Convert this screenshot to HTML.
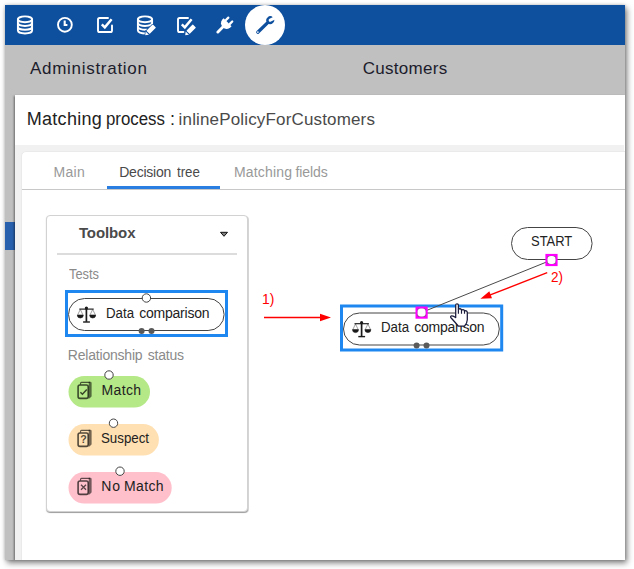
<!DOCTYPE html>
<html lang="en">
<head>
<meta charset="utf-8">
<title>Matching process : inlinePolicyForCustomers</title>
<style>
html,body{margin:0;padding:0;background:#fff;}
body{width:634px;height:569px;position:relative;overflow:hidden;font-family:"Liberation Sans",sans-serif;}
#shot{position:absolute;left:5px;top:5px;width:620px;height:555px;background:#c0c0c0;overflow:hidden;}
#shadow{position:absolute;left:5px;top:5px;width:620px;height:555px;box-shadow:2px 3px 6px rgba(0,0,0,.5),0 0 3px rgba(0,0,0,.2);}
#pg{position:absolute;left:-5px;top:-5px;width:634px;height:569px;}
.abs{position:absolute;}
.t{position:absolute;white-space:nowrap;line-height:1;}
#topbar{left:5px;top:5px;width:620px;height:40px;background:#0e4f9e;}
#sel{left:245px;top:5px;width:40px;height:40px;border-radius:50%;background:#fff;}
#sideblue{left:5px;top:222px;width:10px;height:28px;background:#2960ad;}
#panel{left:15px;top:95px;width:610px;height:465px;background:#fff;box-shadow:-1px 1px 2px rgba(0,0,0,.45);}
#band{left:15px;top:145px;width:609px;height:415px;background:#f1f1f1;}
#card{left:21px;top:151px;width:610px;height:415px;background:#fff;border:1px solid #eaeaea;border-radius:5px 0 0 0;box-sizing:border-box;}
#tabline{left:22px;top:189px;width:603px;height:1px;background:#c8c8c8;}
#tabsel{left:107px;top:186px;width:113px;height:3px;background:#2a7de1;}
#toolbox{left:46px;top:215px;width:202px;height:297px;box-sizing:border-box;border:1px solid #d2d2d2;border-radius:4px;background:#fff;box-shadow:1px 1px 0 rgba(0,0,0,.14),0 1px 1px rgba(0,0,0,.28);}
#hr{left:57px;top:253px;width:180px;height:2px;background:#dcdcdc;}
svg{position:absolute;overflow:visible;}
</style>
</head>
<body>
<div id="shadow"></div>
<div id="shot"><div id="pg">
<div class="abs" id="topbar"></div>
<div class="abs" id="sel"></div>
<div class="abs" id="sideblue"></div>
<div class="abs" id="panel"></div>
<div class="abs" id="band"></div>
<div class="abs" id="card"></div>
<div class="abs" id="tabline"></div>
<div class="abs" id="tabsel"></div>
<div class="abs" id="toolbox"></div>
<div class="abs" id="hr"></div>

<!-- shapes -->
<svg width="634" height="569" viewBox="0 0 634 569" style="left:0;top:0">
  <!-- toolbox: data comparison -->
  <rect x="66.5" y="291.5" width="160" height="44" fill="none" stroke="#1e88f0" stroke-width="3"/>
  <rect x="68.5" y="298.5" width="155.6" height="32" rx="16" ry="16" fill="#fff" stroke="#444" stroke-width="1"/>
  <circle cx="146.4" cy="298" r="4.2" fill="#fff" stroke="#444" stroke-width="1"/>
  <circle cx="141.6" cy="331" r="3" fill="#5a5a5a"/>
  <circle cx="151.5" cy="331" r="3" fill="#5a5a5a"/>
  <!-- toolbox: statuses -->
  <rect x="68.5" y="376" width="81.5" height="31.6" rx="15.8" ry="15.8" fill="#b5e886"/>
  <circle cx="109" cy="375" r="4.2" fill="#fff" stroke="#444" stroke-width="1"/>
  <rect x="68.5" y="424" width="90.4" height="31.6" rx="15.8" ry="15.8" fill="#ffe0b2"/>
  <circle cx="113.5" cy="423.2" r="4.2" fill="#fff" stroke="#444" stroke-width="1"/>
  <rect x="68.5" y="472" width="103.2" height="31.6" rx="15.8" ry="15.8" fill="#ffc0cb"/>
  <circle cx="120" cy="471.2" r="4.2" fill="#fff" stroke="#444" stroke-width="1"/>
  <!-- canvas: start -->
  <rect x="511.5" y="227.5" width="80.6" height="32" rx="16" ry="16" fill="#fff" stroke="#444" stroke-width="1"/>
  <!-- canvas: data comparison -->
  <rect x="341.5" y="306" width="160.2" height="44" fill="none" stroke="#1e88f0" stroke-width="3"/>
  <rect x="343.5" y="313" width="155.8" height="32" rx="16" ry="16" fill="#fff" stroke="#444" stroke-width="1"/>
  <circle cx="416.6" cy="345.5" r="3" fill="#5a5a5a"/>
  <circle cx="426.5" cy="345.5" r="3" fill="#5a5a5a"/>
  <!-- connection line -->
  <line x1="551.5" y1="260" x2="421.5" y2="312.5" stroke="#4a4a4a" stroke-width="1"/>
  <!-- red arrow 1 -->
  <line x1="264" y1="317.5" x2="322" y2="317.5" stroke="#ff0000" stroke-width="1.4"/>
  <polygon points="331,317.5 320,313.8 320,321.2" fill="#ff0000"/>
  <!-- red arrow 2 -->
  <line x1="547.2" y1="272.7" x2="489" y2="295.4" stroke="#ff0000" stroke-width="1.4"/>
  <polygon points="480.4,298.8 489.3,291.3 492,298.2" fill="#ff0000"/>
  <!-- caret -->
  <polygon points="220.5,232.3 227.5,232.3 224,236.3" fill="#808080" stroke="#111" stroke-width="1" stroke-linejoin="round"/>
  <!-- magenta handles -->
  <rect x="546.5" y="255" width="10" height="10" fill="#566656" stroke="#ff00ff" stroke-width="2.2"/>
  <rect x="547.5" y="256" width="8" height="8" rx="3.3" fill="#fff"/>
  <rect x="416.6" y="307.6" width="10" height="10" fill="#566656" stroke="#ff00ff" stroke-width="2.2"/>
  <rect x="417.6" y="308.6" width="8" height="8" rx="3.3" fill="#fff"/>
</svg>

<svg width="634" height="569" viewBox="0 0 634 569" style="left:0;top:0">
  <defs>
    <g id="scale">
      <!-- local origin = pill top-left -->
      <line x1="17.9" y1="9.6" x2="17.9" y2="23.8" stroke="#1a1a1a" stroke-width="1.7"/>
      <circle cx="17.9" cy="10.1" r="1.6" fill="#1a1a1a"/>
      <line x1="10.8" y1="11.1" x2="25.2" y2="11.1" stroke="#1a1a1a" stroke-width="1.15"/>
      <line x1="14.6" y1="24" x2="21.4" y2="24" stroke="#1a1a1a" stroke-width="1.4"/>
      <path d="M8.8 17 H14.8 A3 3 0 0 1 8.8 17Z" fill="#1a1a1a" stroke="#1a1a1a" stroke-width=".6"/>
      <path d="M21.2 17 H27.2 A3 3 0 0 1 21.2 17Z" fill="#1a1a1a" stroke="#1a1a1a" stroke-width=".6"/>
      <path d="M9.2 16.8 L11.8 11.4 L14.4 16.8 M21.6 16.8 L24.2 11.4 L26.8 16.8" fill="none" stroke="#1a1a1a" stroke-width=".75" stroke-opacity=".55"/>
    </g>
    <g id="cards" fill="none" stroke-linejoin="round">
      <!-- local origin = pill top-left; front card 8.8..20.5 x 8.2..23.2 -->
      <path d="M12 8.4 V7.4 Q12 6.4 13 6.4 H21.4" stroke="#000" stroke-opacity=".62" stroke-width="1.1"/>
      <path d="M20.2 5.85 H21.9 Q23.1 5.85 23.1 7.1 V19.9 Q23.1 20.5 22.6 20.9 L20.2 23 Z" fill="#000" fill-opacity=".55" stroke="none"/>
      <rect x="9.6" y="9" width="10.1" height="13.4" rx="1.8" ry="1.8" stroke="#000" stroke-opacity=".68" stroke-width="1.6"/>
    </g>
  </defs>

  <!-- top bar icons -->
  <g fill="none" stroke="#fff" stroke-width="1.9" stroke-linecap="round" stroke-linejoin="round">
    <!-- database -->
    <ellipse cx="25" cy="19.3" rx="7.1" ry="2.9"/>
    <path d="M17.9 19.3 V30.6 A7.1 2.9 0 0 0 32.1 30.6 V19.3"/>
    <path d="M17.9 23.1 A7.1 2.9 0 0 0 32.1 23.1 M17.9 26.9 A7.1 2.9 0 0 0 32.1 26.9"/>
    <!-- clock -->
    <circle cx="64.9" cy="24.8" r="6.9"/>
    <path d="M64.7 20.6 V25 H67.4" stroke-width="2.1" stroke-linecap="butt" stroke-linejoin="miter"/>
    <!-- checkbox -->
    <path d="M108 18 H99.6 A1.6 1.6 0 0 0 98 19.6 V30.4 A1.6 1.6 0 0 0 99.6 32 H110.4 A1.6 1.6 0 0 0 112 30.4 V25.4"/>
    <path d="M101.8 24.4 L104.8 27.4 L111.6 19.2" stroke-width="2.5" stroke-linecap="butt" stroke-linejoin="miter"/>
    <!-- database + pencil -->
    <ellipse cx="145" cy="19.3" rx="7.1" ry="2.9"/>
    <path d="M137.9 19.3 V30.6 A7.1 2.9 0 0 0 145 33.5 M152.1 19.3 V23"/>
    <path d="M137.9 23.1 A7.1 2.9 0 0 0 152.1 23.1 M137.9 26.9 A7.1 2.9 0 0 0 147 29.6"/>
    <!-- checkbox + pencil -->
    <path d="M188 18 H179.6 A1.6 1.6 0 0 0 178 19.6 V30.4 A1.6 1.6 0 0 0 179.6 32 H183.5"/>
    <path d="M181.8 24.4 L184.8 27.4 L191.6 19.2" stroke-width="2.5" stroke-linecap="butt" stroke-linejoin="miter"/>
  </g>
  <!-- pencils -->
  <g transform="translate(145.2 35.2) rotate(-45)" fill="#fff" stroke="#0e4f9e" stroke-width="1.3" paint-order="stroke">
    <path d="M0 0 L3 -2.3 V2.3 Z"/><rect x="4" y="-2.3" width="9" height="4.6" rx=".6"/>
  </g>
  <g transform="translate(185.2 35.2) rotate(-45)" fill="#fff" stroke="#0e4f9e" stroke-width="1.3" paint-order="stroke">
    <path d="M0 0 L3 -2.3 V2.3 Z"/><rect x="4" y="-2.3" width="9" height="4.6" rx=".6"/>
  </g>
  <!-- plug -->
  <g transform="translate(227.6 22.3) rotate(-45)" fill="#fff">
    <rect x="-15.2" y="-1.4" width="10" height="2.8" rx="1.2"/>
    <path d="M0 -5.6 H-1.8 A5.1 5.6 0 0 0 -1.8 5.6 H0 Z"/>
    <rect x="-0.6" y="-3.9" width="5.5" height="2.3" rx="1.1"/>
    <rect x="-0.6" y="1.6" width="5.5" height="2.3" rx="1.1"/>
  </g>
  <!-- wrench -->
  <g transform="translate(257.8 32.2) rotate(-44)">
    <line x1="0" y1="0" x2="14.5" y2="0" stroke="#0e4f9e" stroke-width="3.3" stroke-linecap="round"/>
    <circle cx="17.3" cy="0" r="3.9" fill="#0e4f9e"/>
    <path d="M17.3 -1.6 H23 V1.6 H17.3 A1.6 1.6 0 0 1 17.3 -1.6Z" fill="#fff" transform="rotate(17 17.3 0)"/>
    <circle cx="0.1" cy="0" r=".8" fill="#fff"/>
  </g>

  <!-- scales icons -->
  <use href="#scale" x="68.5" y="298"/>
  <use href="#scale" x="343.7" y="312.6"/>

  <!-- card icons -->
  <use href="#cards" x="68.5" y="376"/>
  <path d="M80.4 392.3 L82.4 394.2 L86.8 389.5" fill="none" stroke="#000" stroke-opacity=".7" stroke-width="1.5"/>
  <use href="#cards" x="68.5" y="424"/>
  <text x="83.6" y="443" font-family="Liberation Sans, sans-serif" font-size="10.6" font-weight="700" fill="#000" fill-opacity=".7" text-anchor="middle">?</text>
  <use href="#cards" x="68.5" y="472"/>
  <path d="M81 484.7 L86 489.7 M86 484.7 L81 489.7" fill="none" stroke="#000" stroke-opacity=".65" stroke-width="1.3"/>

</svg>

<span class="t" style="left:29.90px;top:59.91px;font-size:17px;color:#1c1c2c;font-weight:400;letter-spacing:0.723px">Administration</span>
<span class="t" style="left:362.70px;top:59.91px;font-size:17px;color:#1c1c2c;font-weight:400;letter-spacing:0.300px">Customers</span>
<span class="t" style="left:26.80px;top:109.76px;font-size:18px;color:#222;font-weight:400;letter-spacing:0.271px">Matching</span>
<span class="t" style="left:106.46px;top:109.76px;font-size:18px;color:#222;font-weight:400;transform-origin:0 0;transform:scaleX(0.9355)">process</span>
<span class="t" style="left:170.00px;top:109.76px;font-size:18px;color:#222;font-weight:400;letter-spacing:0.000px">:</span>
<span class="t" style="left:178.60px;top:110.61px;font-size:17px;color:#4a4a4a;font-weight:400;letter-spacing:0.157px">inlinePolicyForCustomers</span>
<span class="t" style="left:53.40px;top:165.35px;font-size:14px;color:#999;font-weight:400;letter-spacing:0.333px">Main</span>
<span class="t" style="left:119.20px;top:165.35px;font-size:14px;color:#4a4a4a;font-weight:400;letter-spacing:-0.214px">Decision</span>
<span class="t" style="left:177.00px;top:165.35px;font-size:14px;color:#4a4a4a;font-weight:400;transform-origin:0 0;transform:scaleX(0.9500)">tree</span>
<span class="t" style="left:234.00px;top:165.35px;font-size:14px;color:#999;font-weight:400;letter-spacing:0.171px">Matching</span>
<span class="t" style="left:295.50px;top:165.35px;font-size:14px;color:#999;font-weight:400;letter-spacing:-0.080px">fields</span>
<span class="t" style="left:78.90px;top:224.90px;font-size:15px;color:#4a4a4a;font-weight:700;letter-spacing:-0.100px">Toolbox</span>
<span class="t" style="left:68.70px;top:267.05px;font-size:14px;color:#8a8a8a;font-weight:400;transform-origin:0 0;transform:scaleX(0.9182)">Tests</span>
<span class="t" style="left:105.65px;top:305.85px;font-size:14px;color:#222;font-weight:400;transform-origin:0 0;transform:scaleX(0.9483)">Data</span>
<span class="t" style="left:139.20px;top:305.85px;font-size:14px;color:#222;font-weight:400;letter-spacing:-0.222px">comparison</span>
<span class="t" style="left:67.80px;top:348.45px;font-size:14px;color:#8a8a8a;font-weight:400;letter-spacing:-0.200px">Relationship</span>
<span class="t" style="left:147.80px;top:348.45px;font-size:14px;color:#8a8a8a;font-weight:400;letter-spacing:-0.240px">status</span>
<span class="t" style="left:101.50px;top:382.65px;font-size:14px;color:#222;font-weight:400;letter-spacing:0.375px">Match</span>
<span class="t" style="left:101.05px;top:431.25px;font-size:14px;color:#222;font-weight:400;transform-origin:0 0;transform:scaleX(0.9500)">Suspect</span>
<span class="t" style="left:101.30px;top:478.75px;font-size:14px;color:#222;font-weight:400;letter-spacing:0.800px">No</span>
<span class="t" style="left:124.00px;top:478.75px;font-size:14px;color:#222;font-weight:400;letter-spacing:0.375px">Match</span>
<span class="t" style="left:530.88px;top:234.25px;font-size:14px;color:#222;font-weight:400;transform-origin:0 0;transform:scaleX(0.9250)">START</span>
<span class="t" style="left:380.65px;top:320.15px;font-size:14px;color:#222;font-weight:400;transform-origin:0 0;transform:scaleX(0.9483)">Data</span>
<span class="t" style="left:414.20px;top:320.15px;font-size:14px;color:#222;font-weight:400;letter-spacing:-0.222px">comparison</span>
<span class="t" style="left:261.68px;top:291.40px;font-size:15px;color:#ff0000;font-weight:400;transform-origin:0 0;transform:scaleX(0.9250)">1)</span>
<span class="t" style="left:551.40px;top:269.10px;font-size:15px;color:#ff0000;font-weight:400;transform-origin:0 0;transform:scaleX(0.9000)">2)</span>
<svg width="634" height="569" viewBox="0 0 634 569" style="left:0;top:0">
  <!-- hand cursor -->
  <path d="M455.7 305.1 A1.35 1.35 0 0 1 458.4 305.1 V309.4 Q460 308 461.5 309.6 V310.2 Q463 308.9 464.5 310.4 V311.2 Q466.4 309.9 467.3 312.2 V319.8 Q467.2 323 464.6 326 H458.2 Q455.4 322.6 451.2 318 Q449.8 316.2 451.6 315.8 Q453.6 315.6 455.7 317.6 Z" fill="#fff" stroke="#1b1b3b" stroke-width="1.25" stroke-linejoin="round"/>
  <path d="M458.4 309.4 V313.8 M461.5 310 V313.8 M464.5 310.8 V313.8" fill="none" stroke="#1b1b3b" stroke-width="1.15"/>
</svg>

</div></div>
</body>
</html>
